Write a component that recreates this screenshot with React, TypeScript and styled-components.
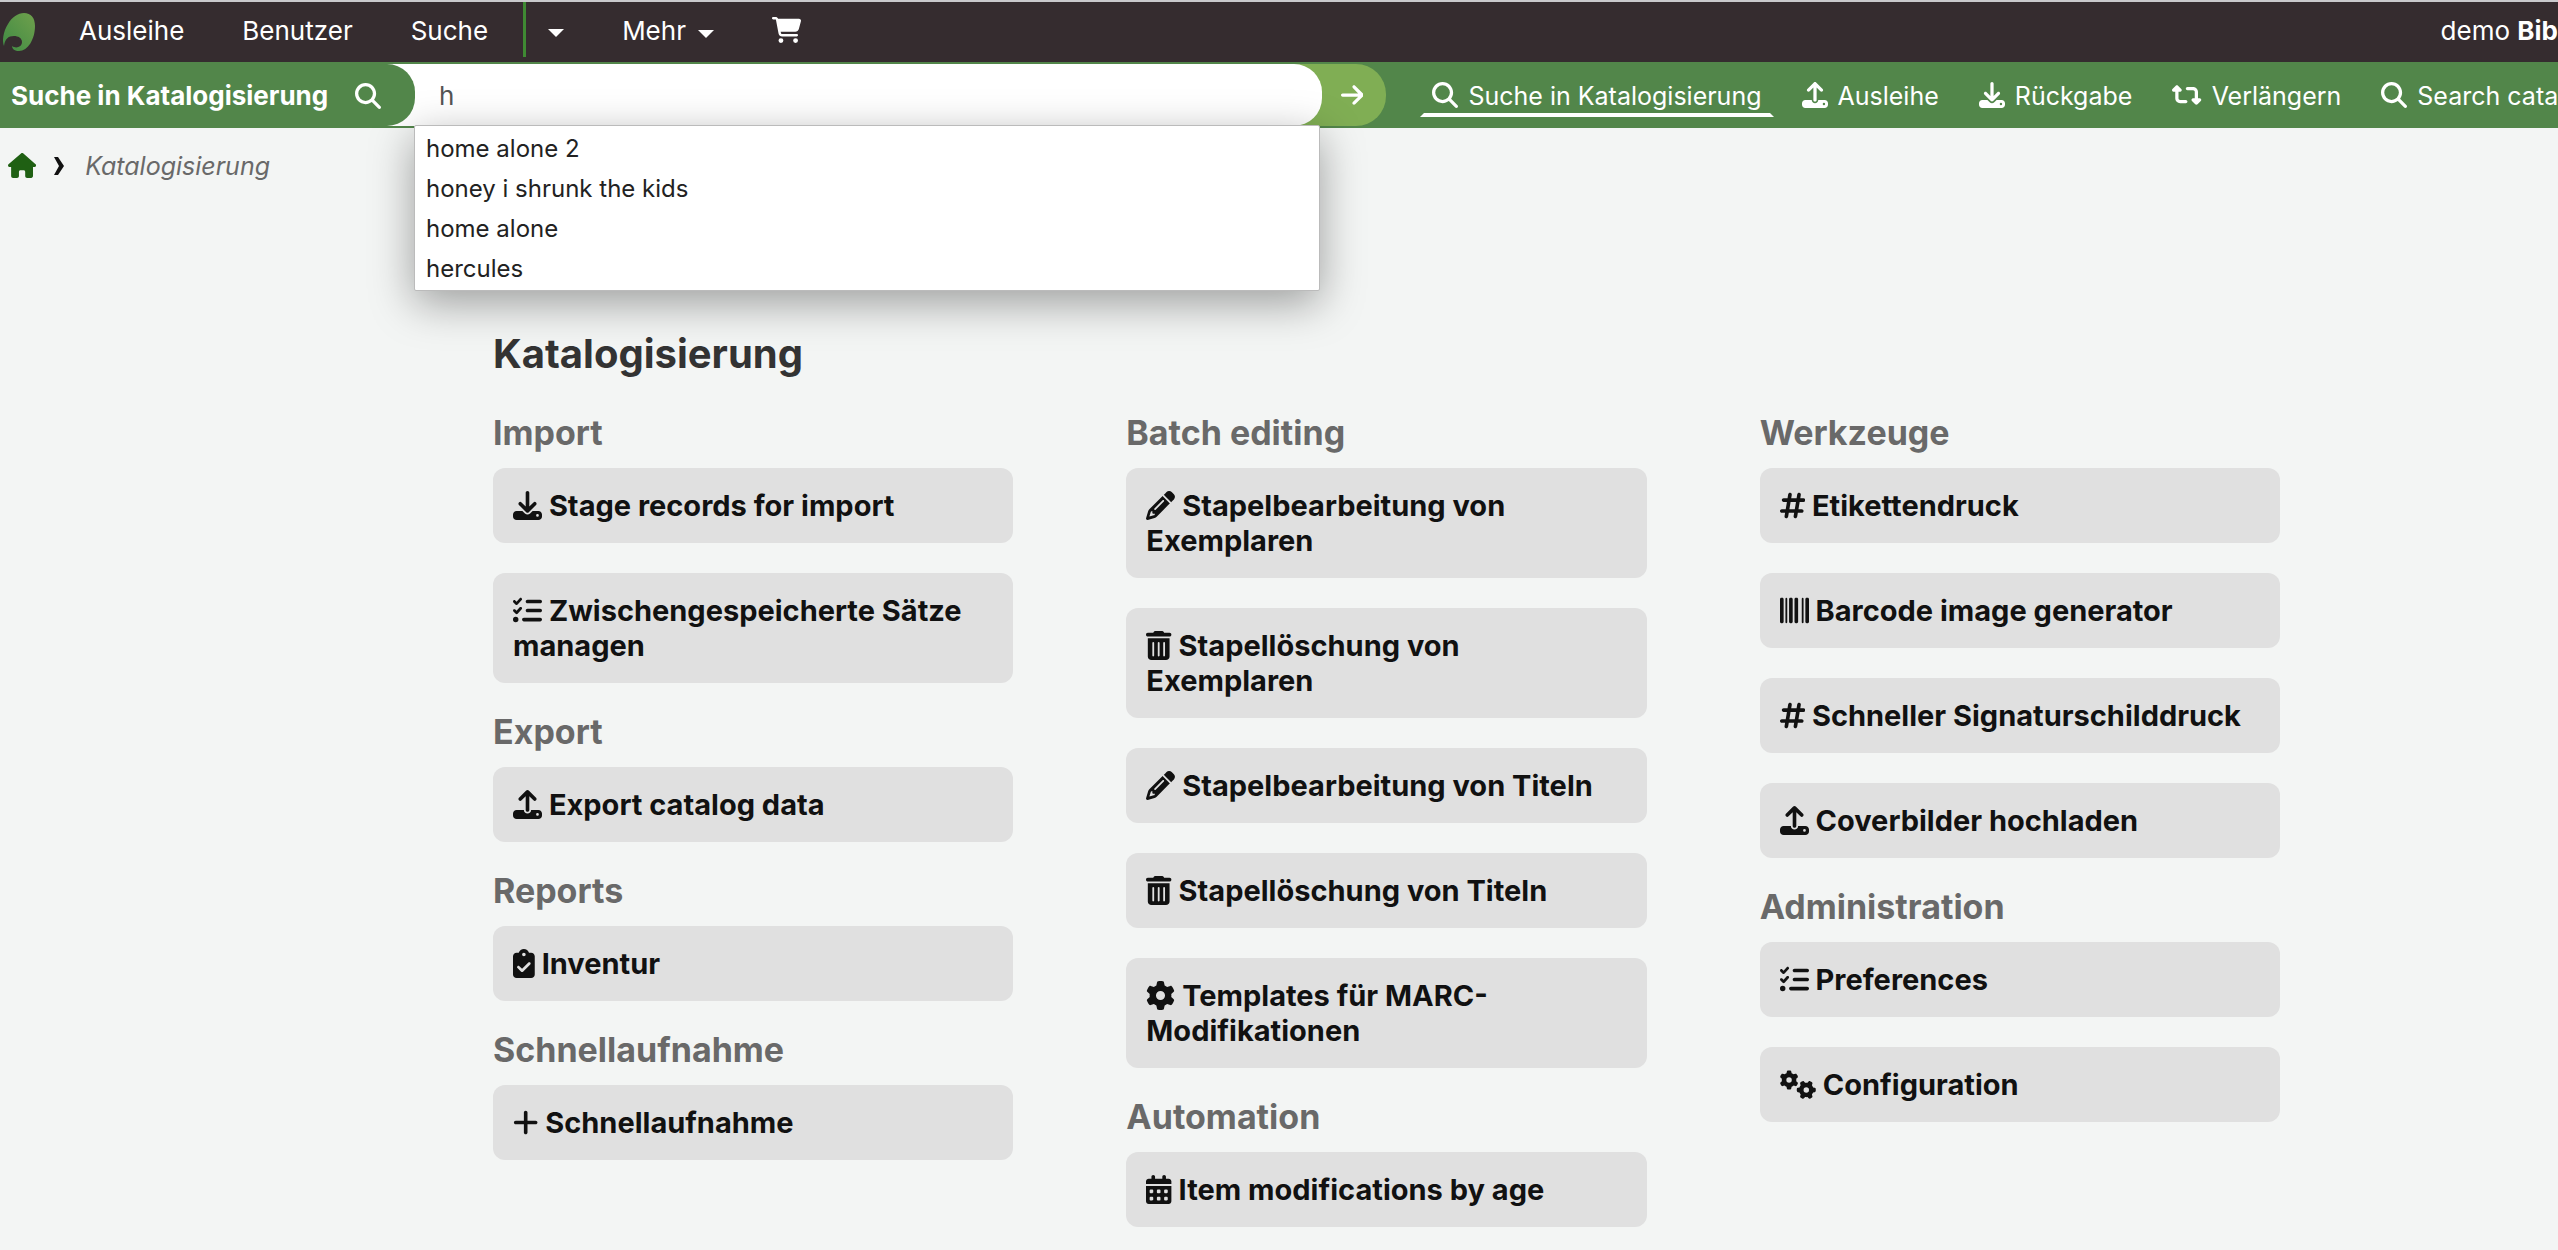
import React from 'react';
import styled, { createGlobalStyle } from 'styled-components';
import type { IconType } from 'react-icons';
import {
  FaArrowRight,
  FaBarcode,
  FaCalendarDays,
  FaCartShopping,
  FaClipboardCheck,
  FaDownload,
  FaGear,
  FaGears,
  FaHashtag,
  FaHouse,
  FaListCheck,
  FaMagnifyingGlass,
  FaPencil,
  FaPlus,
  FaRetweet,
  FaTrashCan,
  FaUpload,
} from 'react-icons/fa6';

const GlobalStyle = createGlobalStyle`
  *, *::before, *::after { box-sizing: border-box; }
  body {
    margin: 0;
    background: #f3f5f4;
    color: #333;
    font-family: Inter, "Liberation Sans", sans-serif;
    font-size: 26px;
    line-height: 36px;
  }
  a { color: inherit; text-decoration: none; }
`;

const Page = styled.div`
  overflow: hidden;
`;

const TopBar = styled.header`
  display: flex;
  align-items: center;
  height: 62px;
  padding-bottom: 3px;
  border-top: 2px solid #c9c9cc;
  background: #352c2f;
  color: #fff;
  white-space: nowrap;
`;

const LogoLink = styled.a`
  display: flex;
  width: 50px;
`;

const MainNav = styled.nav`
  display: flex;
  align-items: center;
  align-self: stretch;
`;

const NavLink = styled.a`
  padding: 0 29px;
`;

const NavButton = styled.button`
  display: flex;
  align-items: center;
  gap: 12px;
  padding: 0 29px;
  border: 0;
  background: none;
  color: inherit;
  font: inherit;
`;

const DividedButton = styled(NavButton)`
  align-self: flex-start;
  height: 55px;
  margin-left: 6px;
  padding-left: 22px;
  border-left: 3px solid #3f8a33;
`;

const Caret = styled.span`
  margin-top: 6px;
  border: 8px solid transparent;
  border-top-color: #fff;
  border-bottom: 0;
`;

const CartLink = styled.a`
  display: flex;
  padding: 0 29px;
`;

const UserInfo = styled.div`
  margin-left: auto;
`;

const SearchBar = styled.div`
  display: flex;
  align-items: center;
  height: 66px;
  background: #52864a;
  color: #fff;
  white-space: nowrap;
`;

const SearchForm = styled.form`
  position: relative;
  flex: none;
  display: flex;
  width: 54.2vw;
  height: 62px;
`;

const SearchLabel = styled.label`
  z-index: 2;
  display: flex;
  align-items: center;
  justify-content: space-between;
  flex: none;
  width: 415px;
  padding: 2px 34px 0 11px;
  border-radius: 0 28px 28px 0;
  background: #52864a;
  font-weight: 700;
`;

const SearchField = styled.div`
  position: relative;
  z-index: 1;
  flex: 1;
  margin-left: -28px;
  display: flex;
`;

const SearchInput = styled.input`
  width: 100%;
  padding: 2px 28px 0 52px;
  border: 0;
  border-radius: 0 28px 28px 0;
  background: #fff;
  color: #555;
  font: inherit;
  outline: 0;
`;

const Suggestions = styled.ul`
  position: absolute;
  top: 61px;
  left: 27px;
  right: 2px;
  margin: 0;
  padding: 3px 0 1px;
  border: 1px solid #bbb;
  border-radius: 2px;
  background: #fff;
  box-shadow: 0 12px 44px rgba(0, 0, 0, 0.36);
  color: #222;
  font-size: 24px;
  list-style: none;
`;

const Suggestion = styled.li`
  padding: 2px 11px;
`;

const GoButton = styled.button`
  display: flex;
  align-items: center;
  justify-content: flex-end;
  flex: none;
  width: 92px;
  margin-left: -28px;
  padding: 0 23px;
  border: 0;
  border-radius: 0 30px 30px 0;
  background: #80ae54;
  color: #fff;
  font: inherit;
`;

const Tabs = styled.nav`
  display: flex;
  gap: 16px;
  padding-left: 34px;
  font-size: 25px;
  line-height: 34px;
`;

const Tab = styled.a<{ $active?: boolean }>`
  display: flex;
  align-items: center;
  gap: 10px;
  padding: 5px 8px 0;
  border: 4px solid transparent;
  border-top: 0;
  border-bottom-color: ${(p) => (p.$active ? '#fff' : 'transparent')};
`;

const Glyph = styled.span<{ $size?: number; $ratio?: number }>`
  font-size: ${(p) => p.$size ?? 26}px;
  line-height: 1;
  svg {
    display: inline-block;
    width: ${(p) => p.$ratio ?? 1}em;
    height: 1em;
    vertical-align: -0.125em;
  }
`;

const Breadcrumbs = styled.nav`
  display: flex;
  align-items: center;
  height: 76px;
  padding-left: 8px;
  font-size: 25px;
`;

const HomeLink = styled.a`
  color: #1f6013;
`;

const Chevron = styled.svg`
  width: 10px;
  height: 18px;
  margin: 0 21px 0 18px;
`;

const Current = styled.span`
  color: #696969;
  font-style: italic;
`;

const Main = styled.main`
  padding: 125px 278px 22px 493px;
`;

const Title = styled.h1`
  margin: 0 0 5px;
  font-size: 40px;
  font-weight: 700;
  line-height: 50px;
`;

const Columns = styled.div`
  display: grid;
  grid-template-columns: repeat(3, minmax(0, 1fr));
  gap: 113px;
  align-items: start;
`;

const SectionTitle = styled.h2`
  margin: 29px 0 15px;
  color: #696969;
  font-size: 34px;
  font-weight: 700;
  line-height: 40px;
`;

const CardList = styled.ul`
  display: grid;
  gap: 30px;
  margin: 0;
  padding: 0;
  list-style: none;
`;

const Card = styled.a`
  display: block;
  padding: 20px;
  border-radius: 12px;
  background: #e0e0e0;
  color: #111;
  font-size: 29px;
  font-weight: 700;
  line-height: 35px;
`;

/* ratio is the icon's width relative to its height */
type Item = { icon: IconType; ratio?: number; label: string };
type SectionData = { title: string; items: Item[] };

const columns: SectionData[][] = [
  [
    {
      title: 'Import',
      items: [
        { icon: FaDownload, label: 'Stage records for import' },
        { icon: FaListCheck, label: 'Zwischengespeicherte Sätze managen' },
      ],
    },
    { title: 'Export', items: [{ icon: FaUpload, label: 'Export catalog data' }] },
    { title: 'Reports', items: [{ icon: FaClipboardCheck, ratio: 0.75, label: 'Inventur' }] },
    {
      title: 'Schnellaufnahme',
      items: [{ icon: FaPlus, ratio: 0.875, label: 'Schnellaufnahme' }],
    },
  ],
  [
    {
      title: 'Batch editing',
      items: [
        { icon: FaPencil, label: 'Stapelbearbeitung von Exemplaren' },
        { icon: FaTrashCan, ratio: 0.875, label: 'Stapellöschung von Exemplaren' },
        { icon: FaPencil, label: 'Stapelbearbeitung von Titeln' },
        { icon: FaTrashCan, ratio: 0.875, label: 'Stapellöschung von Titeln' },
        { icon: FaGear, label: 'Templates für MARC-Modifikationen' },
      ],
    },
    {
      title: 'Automation',
      items: [{ icon: FaCalendarDays, ratio: 0.875, label: 'Item modifications by age' }],
    },
  ],
  [
    {
      title: 'Werkzeuge',
      items: [
        { icon: FaHashtag, ratio: 0.875, label: 'Etikettendruck' },
        { icon: FaBarcode, label: 'Barcode image generator' },
        { icon: FaHashtag, ratio: 0.875, label: 'Schneller Signaturschilddruck' },
        { icon: FaUpload, label: 'Coverbilder hochladen' },
      ],
    },
    {
      title: 'Administration',
      items: [
        { icon: FaListCheck, label: 'Preferences' },
        { icon: FaGears, ratio: 1.25, label: 'Configuration' },
      ],
    },
  ],
];

const tabs: Item[] = [
  { icon: FaMagnifyingGlass, label: 'Suche in Katalogisierung' },
  { icon: FaUpload, label: 'Ausleihe' },
  { icon: FaDownload, label: 'Rückgabe' },
  { icon: FaRetweet, ratio: 1.125, label: 'Verlängern' },
  { icon: FaMagnifyingGlass, label: 'Search cata' },
];

const suggestions = ['home alone 2', 'honey i shrunk the kids', 'home alone', 'hercules'];

function Logo() {
  return (
    <svg width="36" height="41" viewBox="0 0 36 41" aria-hidden="true">
      <defs>
        <linearGradient id="leaf" x1="1" y1="0" x2="0" y2="1">
          <stop offset="0" stopColor="#6fa04c" />
          <stop offset="1" stopColor="#3f8a44" />
        </linearGradient>
      </defs>
      <path
        fill="url(#leaf)"
        d="M24 3C31 3 35 8 35 16C35 29 28 41 19 41C15 41 12 39 12 36C16 39 22 37 22 32C22 28 18 26 14 26C8 26 5 29 4 36C2 31 3 22 8 14C12 7 18 3 24 3Z"
      />
    </svg>
  );
}

export default function App() {
  return (
    <Page>
      <GlobalStyle />
      <TopBar>
        <LogoLink href="#" aria-label="Koha">
          <Logo />
        </LogoLink>
        <MainNav>
          <NavLink href="#">Ausleihe</NavLink>
          <NavLink href="#">Benutzer</NavLink>
          <NavLink href="#">Suche</NavLink>
          <DividedButton type="button" aria-label="Suchoptionen">
            <Caret />
          </DividedButton>
          <NavButton type="button">
            Mehr <Caret />
          </NavButton>
          <CartLink href="#" aria-label="Korb">
            <Glyph $ratio={1.125}>
              <FaCartShopping />
            </Glyph>
          </CartLink>
        </MainNav>
        <UserInfo>
          demo <strong>Bib</strong>
        </UserInfo>
      </TopBar>

      <SearchBar>
        <SearchForm onSubmit={(e) => e.preventDefault()}>
          <SearchLabel htmlFor="catalog-search">
            Suche in Katalogisierung
            <Glyph>
              <FaMagnifyingGlass />
            </Glyph>
          </SearchLabel>
          <SearchField>
            <SearchInput id="catalog-search" type="text" defaultValue="h" autoComplete="off" />
            <Suggestions>
              {suggestions.map((s) => (
                <Suggestion key={s}>{s}</Suggestion>
              ))}
            </Suggestions>
          </SearchField>
          <GoButton type="submit" aria-label="Suchen">
            <Glyph $ratio={0.875}>
              <FaArrowRight />
            </Glyph>
          </GoButton>
        </SearchForm>
        <Tabs>
          {tabs.map(({ icon: Icon, ratio, label }, i) => (
            <Tab key={label} href="#" $active={i === 0}>
              <Glyph $ratio={ratio}>
                <Icon />
              </Glyph>
              {label}
            </Tab>
          ))}
        </Tabs>
      </SearchBar>

      <Breadcrumbs>
        <HomeLink href="#" aria-label="Startseite">
          <Glyph $size={25} $ratio={1.125}>
            <FaHouse />
          </Glyph>
        </HomeLink>
        <Chevron viewBox="0 0 10 18" aria-hidden="true">
          <path d="M0 0H4L10 9L4 18H0L5 9Z" fill="#111" />
        </Chevron>
        <Current>Katalogisierung</Current>
      </Breadcrumbs>

      <Main>
        <Title>Katalogisierung</Title>
        <Columns>
          {columns.map((sections) => (
            <div key={sections[0].title}>
              {sections.map(({ title, items }) => (
                <section key={title}>
                  <SectionTitle>{title}</SectionTitle>
                  <CardList>
                    {items.map(({ icon: Icon, ratio, label }) => (
                      <li key={label}>
                        <Card href="#">
                          <Glyph $size={29} $ratio={ratio}>
                            <Icon />
                          </Glyph>{' '}
                          {label}
                        </Card>
                      </li>
                    ))}
                  </CardList>
                </section>
              ))}
            </div>
          ))}
        </Columns>
      </Main>
    </Page>
  );
}
